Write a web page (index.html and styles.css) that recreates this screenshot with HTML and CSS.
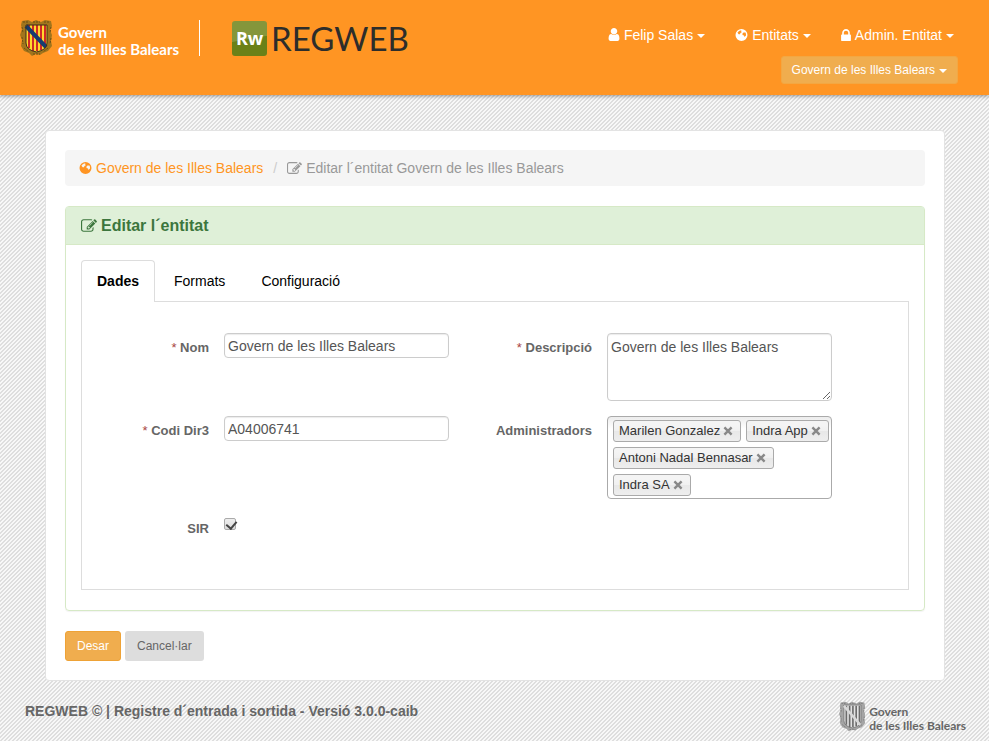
FILE: index.html
```html
<!DOCTYPE html>
<html lang="ca">
<head>
    <meta charset="UTF-8">
    <meta name="viewport" content="width=device-width, initial-scale=1.0">
    <title>REGWEB - Editar l´entitat</title>
    <link rel="stylesheet" href="styles.css">
</head>
<body>
    <!-- Shared icons -->
    <svg class="sprite" aria-hidden="true">
        <symbol id="icon-user" viewBox="0 -1408 1280 1536">
            <path transform="scale(1,-1)" d="M1280 137q0 -109 -62.5 -187t-150.5 -78h-854q-88 0 -150.5 78t-62.5 187q0 85 8.5 160.5t31.5 152t58.5 131t94 89t134.5 34.5q131 -128 313 -128t313 128q76 0 134.5 -34.5t94 -89t58.5 -131t31.5 -152t8.5 -160.5zM1024 1024q0 -159 -112.5 -271.5t-271.5 -112.5t-271.5 112.5t-112.5 271.5t112.5 271.5t271.5 112.5t271.5 -112.5t112.5 -271.5z"/>
        </symbol>
        <symbol id="icon-lock" viewBox="0 -1408 1152 1408">
            <path transform="scale(1,-1)" d="M320 768h512v192q0 106 -75 181t-181 75t-181 -75t-75 -181v-192zM1152 672v-576q0 -40 -28 -68t-68 -28h-960q-40 0 -68 28t-28 68v576q0 40 28 68t68 28h32v192q0 184 132 316t316 132t316 -132t132 -316v-192h32q40 0 68 -28t28 -68z"/>
        </symbol>
        <symbol id="icon-edit" viewBox="0 -1408 1792 1408">
            <path transform="scale(1,-1)" d="M888 352l116 116l-152 152l-116 -116v-56h96v-96h56zM1328 1072q-16 16 -33 -1l-350 -350q-17 -17 -1 -33t33 1l350 350q17 17 1 33zM1408 478v-190q0 -119 -84.5 -203.5t-203.5 -84.5h-832q-119 0 -203.5 84.5t-84.5 203.5v832q0 119 84.5 203.5t203.5 84.5h832q63 0 117 -25q15 -7 18 -23q3 -17 -9 -29l-49 -49q-14 -14 -32 -8q-23 6 -45 6h-832q-66 0 -113 -47t-47 -113v-832q0 -66 47 -113t113 -47h832q66 0 113 47t47 113v126q0 13 9 22l64 64q15 15 35 7t20 -29zM1312 1216l288 -288l-672 -672h-288v288zM1756 1084l-92 -92l-288 288l92 92q28 28 68 28t68 -28l152 -152q28 -28 28 -68t-28 -68z"/>
        </symbol>
        <symbol id="icon-globe" viewBox="0 0 24 24">
            <path fill-rule="evenodd" d="M12 0a12 12 0 1 0 0 24a12 12 0 1 0 0-24zM9 3L12 3L11 5L13 6L10 8L9 10L7 11L5 9L4 7L6 5zM16 7L20 7L21 10L21 13L19 15L18 16L17 13L14 12L14 9z"/>
        </symbol>
        <symbol id="crest" viewBox="0 0 33 36">
            <path class="crest-frame" d="M2 1L8 0L12 2L16 0L21 2L25 0L31 1L32 6L30 10L32 15L31 21L32 26L28 31L23 33L20 35L16 34L12 36L9 33L4 31L1 26L2 20L0 15L2 9L1 5z"/>
            <path class="crest-marks" d="M3 2h6M13 2h7M24 2h6M2 7l1 6M31 7l-1 6M2 17l1 7M31 18l-1 6M4 28l5 4M28 28l-5 4M13 34h7" />
            <path class="crest-field" d="M6 5H27V23Q27 30 16.500 32Q6 30 6 23z"/>
            <path class="crest-bars" d="M9 5V28M13 5V31M17 5V31M21 5V30M25 5V27"/>
            <path class="crest-band" d="M6 6L26 27"/>
            <path class="crest-line" d="M6 5H27V23Q27 30 16.500 32Q6 30 6 23z"/>
        </symbol>
        <symbol id="crest-grey" viewBox="0 0 33 36">
            <path class="grey-frame" d="M2 1L8 0L12 2L16 0L21 2L25 0L31 1L32 6L30 10L32 15L31 21L32 26L28 31L23 33L20 35L16 34L12 36L9 33L4 31L1 26L2 20L0 15L2 9L1 5z"/>
            <path class="grey-marks" d="M3 2h6M13 2h7M24 2h6M2 7l1 6M31 7l-1 6M2 17l1 7M31 18l-1 6M4 28l5 4M28 28l-5 4M13 34h7" />
            <path class="grey-field" d="M6 4H27V23Q27 30 16.500 32Q6 30 6 23z"/>
            <path class="grey-bars" d="M9 5V28M13 5V31M17 5V31M21 5V30M25 5V27"/>
            <path class="grey-band" d="M6 5L26 28"/>
        </symbol>
    </svg>

    <header class="navbar">
        <div class="brand">
            <a class="govern" href="#">
                <svg class="crest" aria-hidden="true"><use href="#crest"/></svg>
                <span>Govern<br>de les Illes Balears</span>
            </a>
            <a class="app-logo" href="#">
                <span class="app-mark">Rw</span>
                <span class="app-name">REGWEB</span>
            </a>
        </div>
        <nav class="menus">
            <div class="menu-row">
                <button type="button" class="menu"><svg class="icon icon-user" aria-hidden="true"><use href="#icon-user"/></svg>Felip Salas<span class="caret"></span></button>
                <button type="button" class="menu"><svg class="icon icon-globe" aria-hidden="true"><use href="#icon-globe"/></svg>Entitats<span class="caret"></span></button>
                <button type="button" class="menu"><svg class="icon icon-lock" aria-hidden="true"><use href="#icon-lock"/></svg>Admin. Entitat<span class="caret"></span></button>
            </div>
            <button type="button" class="btn btn-warning btn-entity">Govern de les Illes Balears<span class="caret"></span></button>
        </nav>
    </header>

    <main class="well">
        <ol class="breadcrumb">
            <li><a href="#"><svg class="icon icon-globe" aria-hidden="true"><use href="#icon-globe"/></svg>Govern de les Illes Balears</a></li>
            <li class="active"><svg class="icon icon-edit" aria-hidden="true"><use href="#icon-edit"/></svg>Editar l´entitat Govern de les Illes Balears</li>
        </ol>

        <form>
            <section class="panel">
                <h1 class="panel-heading"><svg class="icon icon-edit" aria-hidden="true"><use href="#icon-edit"/></svg>Editar l´entitat</h1>
                <div class="panel-body">
                    <div class="tabs" role="tablist">
                        <button type="button" class="tab tab-active" role="tab" aria-selected="true">Dades</button>
                        <button type="button" class="tab" role="tab" aria-selected="false">Formats</button>
                        <button type="button" class="tab" role="tab" aria-selected="false">Configuració</button>
                    </div>
                    <div class="tab-content">
                        <div class="field">
                            <label for="nom"><span class="required">*</span> Nom</label>
                            <input type="text" id="nom" class="form-control" value="Govern de les Illes Balears">
                        </div>
                        <div class="field">
                            <label for="descripcio"><span class="required">*</span> Descripció</label>
                            <textarea id="descripcio" class="form-control">Govern de les Illes Balears</textarea>
                        </div>
                        <div class="field">
                            <label for="codi"><span class="required">*</span> Codi Dir3</label>
                            <input type="text" id="codi" class="form-control" value="A04006741">
                        </div>
                        <div class="field">
                            <span class="field-label" id="admins-label">Administradors</span>
                            <ul class="chosen" aria-labelledby="admins-label">
                                <li>Marilen Gonzalez<button type="button" class="remove" aria-label="Eliminar"><svg viewBox="0 0 10 10"><path d="M2 2L8 8M8 2L2 8"/></svg></button></li>
                                <li>Indra App<button type="button" class="remove" aria-label="Eliminar"><svg viewBox="0 0 10 10"><path d="M2 2L8 8M8 2L2 8"/></svg></button></li>
                                <li>Antoni Nadal Bennasar<button type="button" class="remove" aria-label="Eliminar"><svg viewBox="0 0 10 10"><path d="M2 2L8 8M8 2L2 8"/></svg></button></li>
                                <li>Indra SA<button type="button" class="remove" aria-label="Eliminar"><svg viewBox="0 0 10 10"><path d="M2 2L8 8M8 2L2 8"/></svg></button></li>
                            </ul>
                        </div>
                        <div class="field">
                            <label for="sir">SIR</label>
                            <input type="checkbox" id="sir" class="check" checked>
                        </div>
                    </div>
                </div>
            </section>

            <div class="actions">
                <button type="submit" class="btn btn-warning">Desar</button>
                <button type="button" class="btn btn-default">Cancel·lar</button>
            </div>
        </form>
    </main>

    <footer class="footer">
        <p>REGWEB © | Registre d´entrada i sortida - Versió 3.0.0-caib</p>
        <div class="govern govern-grey">
            <svg class="crest" aria-hidden="true"><use href="#crest-grey"/></svg>
            <span>Govern<br>de les Illes Balears</span>
        </div>
    </footer>
</body>
</html>
```
FILE: styles.css
```css
* {
    box-sizing: border-box;
}
body {
    margin: 0;
    font-family: "Liberation Sans", Arial, sans-serif;
    font-size: 14px;
    line-height: 20px;
    color: #555;
    background: #fff linear-gradient(135deg, #dedede 25%, #f8f8f8 25%, #f8f8f8 50%, #dedede 50%, #dedede 75%, #f8f8f8 75%);
    background-size: 4px 4px;
}
button {
    font-family: inherit;
    cursor: pointer;
}
a {
    text-decoration: none;
}
.sprite {
    display: none;
}
.icon {
    height: 12px;
    fill: currentColor;
    margin-right: 4px;
    vertical-align: -1px;
}
.icon-user {
    width: 12px;
    height: 13px;
}
.icon-globe {
    width: 13px;
}
.icon-lock {
    width: 10px;
}
.icon-edit {
    width: 15px;
}
.caret {
    display: inline-block;
    margin-left: 4px;
    vertical-align: middle;
    border-top: 4px solid;
    border-left: 4px solid transparent;
    border-right: 4px solid transparent;
}

/* Header */
.navbar {
    display: flex;
    justify-content: space-between;
    align-items: flex-start;
    min-height: 95px;
    padding: 20px 31px 0 20px;
    background: #ff9523;
    box-shadow: 0 1px 4px rgba(0, 0, 0, 0.4);
}
.brand {
    display: flex;
    align-items: flex-start;
}
.govern {
    display: flex;
    gap: 5px;
    color: #fff;
    font: bold 15px/17px Lato, sans-serif;
}
.govern span {
    padding-top: 4px;
}
.brand .govern {
    height: 36px;
    padding-right: 20px;
    border-right: 1px solid #fff;
}
.crest {
    width: 33px;
    height: 36px;
    fill: none;
}
.crest-frame {
    fill: #a2751c;
}
.crest-marks {
    stroke: #6d4f14;
    stroke-width: 1;
    stroke-dasharray: 2 1;
}
.crest-field {
    fill: #ffd72e;
}
.crest-bars {
    stroke: #d02a24;
    stroke-width: 2;
}
.crest-band {
    stroke: #163c70;
    stroke-width: 4;
}
.crest-line {
    stroke: #3b2f1c;
}
.grey-frame {
    fill: #a5a5a5;
}
.grey-marks {
    stroke: #777;
    stroke-dasharray: 2 1;
}
.grey-field {
    fill: #e2e2e2;
    stroke: #777;
}
.grey-bars {
    stroke: #6c6c6c;
    stroke-width: 2;
}
.grey-band {
    stroke: #d8d8d8;
    stroke-width: 3;
}
.app-logo {
    display: flex;
    align-items: center;
    gap: 4px;
    margin-left: 32px;
    color: #2d2d2b;
}
.app-mark {
    width: 35px;
    height: 35px;
    border-radius: 3px;
    background: linear-gradient(170deg, #84963b 50%, #6b8118 52%);
    color: #fff;
    font: bold 18px/34px "Open Sans", sans-serif;
    text-align: center;
}
.app-name {
    font: 33px/36px Lato, sans-serif;
}
.menus {
    display: flex;
    flex-direction: column;
    align-items: flex-end;
    gap: 11px;
}
.menu-row {
    display: flex;
    gap: 30px;
    padding: 5px 4px 0 0;
}
.menu {
    padding: 0;
    border: 0;
    background: none;
    color: #fff;
    font-size: 14px;
    line-height: 20px;
}

/* Buttons */
.btn {
    padding: 5px 11px;
    border: 1px solid transparent;
    border-radius: 3px;
    font-size: 12px;
    line-height: 18px;
}
.btn-warning {
    background: #f0ad4e;
    border-color: #eea236;
    color: #fff;
}
.btn-default {
    background: #ddd;
    color: #666;
}
.btn-entity {
    padding: 4px 10px;
    border-color: #f3a742;
}

/* Page content */
.well {
    margin: 35px 44px 0 45px;
    padding: 19px;
    background: #fff;
    border: 1px solid #e3e3e3;
    border-radius: 4px;
}
.breadcrumb {
    display: flex;
    margin: 0 0 20px;
    padding: 8px 14px;
    list-style: none;
    background: #f5f5f5;
    border-radius: 4px;
}
.breadcrumb a {
    color: #ff9523;
}
.breadcrumb .active {
    color: #999;
}
.breadcrumb .active::before {
    content: "/";
    padding: 0 10px;
    color: #ccc;
}
.panel {
    border: 1px solid #d6e9c6;
    border-radius: 4px;
    box-shadow: 0 1px 1px rgba(0, 0, 0, 0.05);
}
.panel-heading {
    margin: 0;
    padding: 9px 15px 8px;
    background: #dff0d8;
    border-bottom: 1px solid #d6e9c6;
    color: #3c763d;
    font-size: 16px;
    line-height: 20px;
}
.panel-heading .icon {
    width: 16px;
    height: 13px;
}
.panel-body {
    padding: 15px 15px 20px;
}
.tabs {
    display: flex;
    gap: 2px;
}
.tab {
    padding: 10px 16px;
    border: 1px solid transparent;
    border-bottom: 0;
    background: none;
    color: #000;
    font-size: 14px;
    line-height: 20px;
}
.tab-active {
    margin-bottom: -1px;
    padding: 10px 15px 11px;
    border-color: #ddd;
    border-radius: 4px 4px 0 0;
    background: #fff;
    font-weight: bold;
    z-index: 1;
}
.tab-content {
    display: grid;
    grid-template-columns: 1fr 1fr;
    column-gap: 16px;
    row-gap: 15px;
    padding: 31px 76px 50px 0;
    border: 1px solid #ddd;
}
.field {
    display: grid;
    grid-template-columns: 1fr 225px;
    column-gap: 15px;
    align-items: start;
}
.field label,
.field-label {
    padding-top: 5px;
    color: #666;
    font-size: 13px;
    font-weight: bold;
    text-align: right;
}
.required {
    color: #a94442;
    font-weight: normal;
}
.form-control {
    width: 100%;
    height: 25px;
    padding: 2px 3px;
    border: 1px solid #ccc;
    border-radius: 4px;
    box-shadow: inset 0 1px 1px rgba(0, 0, 0, 0.08);
    color: #555;
    font: inherit;
}
textarea.form-control {
    height: 68px;
    padding-top: 3px;
}
.chosen {
    display: flex;
    flex-wrap: wrap;
    gap: 5px;
    margin: 0;
    padding: 3px 2px 2px 5px;
    list-style: none;
    border: 1px solid #aaa;
    border-radius: 4px;
    background: linear-gradient(#eee 1px, #fff 12px);
}
.chosen li {
    display: flex;
    align-items: center;
    height: 22px;
    padding: 0 6px 0 5px;
    border: 1px solid #aaa;
    border-radius: 3px;
    background: linear-gradient(#f4f4f4 20%, #f0f0f0 50%, #e8e8e8 52%, #eee);
    color: #333;
    font-size: 13px;
}
.remove {
    display: flex;
    margin-left: 2px;
    padding: 0;
    border: 0;
    background: none;
}
.remove svg {
    width: 12px;
    height: 12px;
    stroke: #888;
    stroke-width: 2;
}
.check {
    appearance: none;
    width: 12px;
    height: 12px;
    margin: 4px 0 0;
    border: 1px solid #aaa;
    border-radius: 2px;
    background: linear-gradient(#eee, #ddd);
}
.check:checked::before {
    content: "";
    display: block;
    width: 5px;
    height: 8px;
    margin: 0 0 0 3px;
    border: solid #444;
    border-width: 0 2px 2px 0;
    transform: rotate(40deg);
}
.actions {
    display: flex;
    gap: 4px;
    margin-top: 20px;
}

/* Footer */
.footer {
    display: flex;
    justify-content: space-between;
    padding: 20px 23px 8px 25px;
    color: #666;
    font-weight: bold;
}
.footer p {
    margin: 0;
}
.govern-grey {
    gap: 3px;
    color: #666;
    font-size: 12px;
    line-height: 14px;
}
.govern-grey .crest {
    width: 27px;
    height: 31px;
}
```
